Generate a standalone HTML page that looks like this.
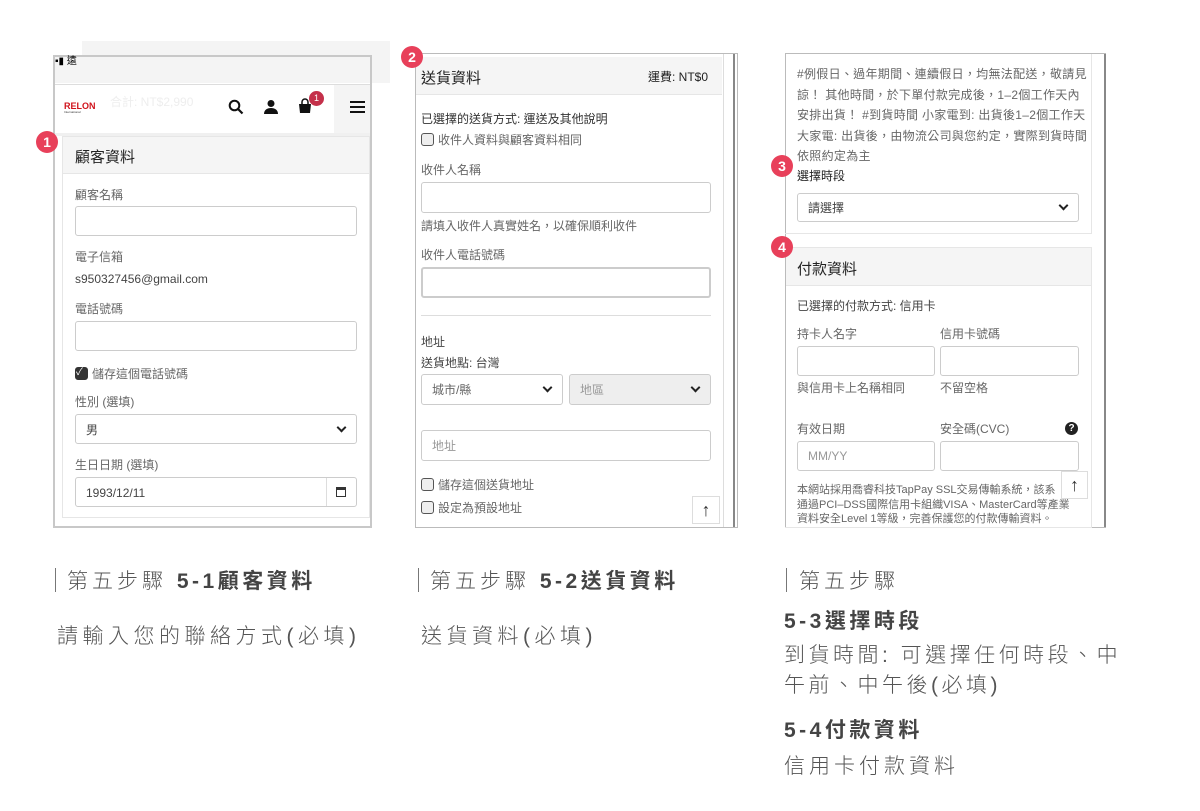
<!DOCTYPE html>
<html><head><meta charset="utf-8"><style>
*{box-sizing:border-box;margin:0;padding:0}
body{width:1200px;height:811px;background:#fff;position:relative;overflow:hidden;font-family:"Liberation Sans","Noto Sans CJK TC",sans-serif;color:#333}
.a{position:absolute}
.t{position:absolute;font-size:12px;color:#444;white-space:nowrap;line-height:14px}
.g{color:#666}
.in{position:absolute;border:1px solid #ccc;border-radius:3px;background:#fff}
.hd{position:absolute;background:#f5f5f5;border-bottom:1px solid #e6e6e6;font-size:15px;color:#222}
.badge{position:absolute;width:22px;height:22px;border-radius:50%;background:#e8405a;color:#fff;font-size:14px;font-weight:bold;text-align:center;line-height:22px}
.chev{position:absolute;width:7px;height:7px;border-right:2px solid #222;border-bottom:2px solid #222;transform:rotate(45deg)}
.cb{position:absolute;width:13px;height:13px;border:1.5px solid #555;border-radius:3px;background:#eee}
.cap{position:absolute;font-size:21px;color:#555;letter-spacing:4px;white-space:nowrap;font-weight:300}
.cap b{color:#444;font-weight:bold;letter-spacing:3.5px}
.bar{position:absolute;width:1px;height:24px;background:#777}
</style></head><body>

<!-- Panel 1 -->
<div class="a" style="left:82px;top:41px;width:308px;height:42px;background:#f4f4f4"></div>
<div class="a" style="left:53px;top:55px;width:319px;height:473px;border:2px solid #c8c8c8;background:#fff"></div>
<div class="a" style="left:55px;top:57px;width:315px;height:26px;background:#f4f4f4"></div>
<div class="t" style="left:55px;top:55px;font-size:10px;color:#000">▪▮ 遠</div>
<div class="a" style="left:55px;top:84px;width:315px;height:1px;background:#ddd"></div>
<div class="t" style="left:64px;top:101px;font-size:9px;font-weight:bold;color:#d0121b;line-height:10px">RELON</div>
<div class="t" style="left:64px;top:110px;font-size:3px;color:#333;line-height:4px">International</div>
<div class="t" style="left:110px;top:95px;font-size:12px;color:#eee">合計: NT$2,990</div>
<svg class="a" style="left:228px;top:99px" width="16" height="16" viewBox="0 0 16 16"><circle cx="6.5" cy="6.5" r="4.8" fill="none" stroke="#111" stroke-width="2"/><path d="M10 10l4.5 4.5" stroke="#111" stroke-width="2.2"/></svg>
<svg class="a" style="left:263px;top:99px" width="16" height="16" viewBox="0 0 16 16"><circle cx="8" cy="4.5" r="3.5" fill="#111"/><path d="M1 15c0-4 3-6 7-6s7 2 7 6z" fill="#111"/></svg>
<svg class="a" style="left:297px;top:98px" width="16" height="16" viewBox="0 0 16 16"><path d="M5 6V4a3 3 0 0 1 6 0v2" fill="none" stroke="#111" stroke-width="1.5"/><path d="M2 6h12l-1 9H3z" fill="#111"/></svg>
<div class="a" style="left:309px;top:91px;width:15px;height:15px;border-radius:50%;background:#c4304a;color:#fff;font-size:9px;text-align:center;line-height:15px">1</div>
<div class="a" style="left:334px;top:85px;width:36px;height:48px;background:#f4f4f4"></div>
<div class="a" style="left:350px;top:101px;width:15px;height:2px;background:#111;box-shadow:0 5px 0 #111,0 10px 0 #111"></div>
<div class="a" style="left:55px;top:133px;width:315px;height:3px;background:#f0f0f0"></div>
<div class="a" style="left:62px;top:136px;width:308px;height:382px;border:1px solid #e6e6e6"></div>
<div class="hd" style="left:63px;top:137px;width:306px;height:37px;padding:9px 0 0 12px">顧客資料</div>
<div class="badge" style="left:36px;top:131px">1</div>
<div class="t g" style="left:75px;top:188px">顧客名稱</div>
<div class="in" style="left:75px;top:206px;width:282px;height:30px"></div>
<div class="t g" style="left:75px;top:250px">電子信箱</div>
<div class="t" style="left:75px;top:272px">s950327456@gmail.com</div>
<div class="t g" style="left:75px;top:302px">電話號碼</div>
<div class="in" style="left:75px;top:321px;width:282px;height:30px"></div>
<div class="cb" style="left:75px;top:367px;background:#333;border-color:#333"></div>
<div class="t" style="left:76px;top:366px;color:#fff;font-size:10px">✓</div>
<div class="t g" style="left:92px;top:367px">儲存這個電話號碼</div>
<div class="t g" style="left:75px;top:395px">性別 (選填)</div>
<div class="in" style="left:75px;top:414px;width:282px;height:30px"></div>
<div class="t" style="left:86px;top:423px">男</div>
<div class="chev" style="left:338px;top:424px"></div>
<div class="t g" style="left:75px;top:458px">生日日期 (選填)</div>
<div class="in" style="left:75px;top:477px;width:282px;height:30px"></div>
<div class="a" style="left:326px;top:478px;width:1px;height:28px;background:#ddd"></div>
<div class="t" style="left:86px;top:486px">1993/12/11</div>
<div class="a" style="left:336px;top:487px;width:10px;height:10px;border:1.5px solid #333;border-top-width:3px"></div>

<!-- Panel 2 -->
<div class="a" style="left:415px;top:53px;width:323px;height:475px;border:1px solid #bbb;background:#fff"></div>
<div class="a" style="left:723px;top:54px;width:14px;height:473px;background:#fff;border-left:1px solid #ddd"></div>
<div class="a" style="left:733px;top:54px;width:2px;height:473px;background:#888"></div>
<div class="hd" style="left:416px;top:57px;width:306px;height:38px;padding:10px 0 0 5px">送貨資料</div>
<div class="t" style="left:648px;top:70px;color:#222">運費: NT$0</div>
<div class="badge" style="left:401px;top:46px">2</div>
<div class="t" style="left:421px;top:112px;color:#333">已選擇的送貨方式: 運送及其他說明</div>
<div class="cb" style="left:421px;top:133px"></div>
<div class="t g" style="left:438px;top:133px">收件人資料與顧客資料相同</div>
<div class="t g" style="left:421px;top:163px">收件人名稱</div>
<div class="in" style="left:421px;top:182px;width:290px;height:31px"></div>
<div class="t g" style="left:421px;top:219px">請填入收件人真實姓名，以確保順利收件</div>
<div class="t g" style="left:421px;top:248px">收件人電話號碼</div>
<div class="in" style="left:421px;top:267px;width:290px;height:31px;border-width:2px"></div>
<div class="a" style="left:421px;top:315px;width:290px;height:1px;background:#ddd"></div>
<div class="t" style="left:421px;top:335px">地址</div>
<div class="t" style="left:421px;top:356px">送貨地點: 台灣</div>
<div class="in" style="left:421px;top:374px;width:142px;height:31px"></div>
<div class="t g" style="left:432px;top:383px">城市/縣</div>
<div class="chev" style="left:544px;top:384px"></div>
<div class="in" style="left:569px;top:374px;width:142px;height:31px;background:#eee"></div>
<div class="t" style="left:580px;top:383px;color:#999">地區</div>
<div class="chev" style="left:692px;top:384px"></div>
<div class="in" style="left:421px;top:430px;width:290px;height:31px"></div>
<div class="t" style="left:432px;top:439px;color:#999">地址</div>
<div class="cb" style="left:421px;top:478px"></div>
<div class="t g" style="left:438px;top:478px">儲存這個送貨地址</div>
<div class="cb" style="left:421px;top:501px"></div>
<div class="t g" style="left:438px;top:501px">設定為預設地址</div>
<div class="a" style="left:692px;top:496px;width:28px;height:28px;border:1px solid #ddd;background:#fff;font-size:18px;text-align:center;line-height:26px;color:#333">↑</div>

<!-- Panel 3 -->
<div class="a" style="left:785px;top:53px;width:321px;height:475px;border:1px solid #bbb;background:#fff"></div>
<div class="a" style="left:1104px;top:54px;width:2px;height:473px;background:#888"></div>
<div class="a" style="left:785px;top:54px;width:307px;height:180px;border-right:1px solid #e6e6e6;border-bottom:1px solid #e6e6e6"></div>
<div class="t g" style="left:797px;top:64px;line-height:20.5px;letter-spacing:0.3px">#例假日、過年期間、連續假日，均無法配送，敬請見<br>諒！ 其他時間，於下單付款完成後，1–2個工作天內<br>安排出貨！ #到貨時間 小家電到: 出貨後1–2個工作天<br>大家電: 出貨後，由物流公司與您約定，實際到貨時間<br>依照約定為主</div>
<div class="badge" style="left:771px;top:155px">3</div>
<div class="t" style="left:797px;top:169px;color:#222">選擇時段</div>
<div class="in" style="left:797px;top:193px;width:282px;height:29px"></div>
<div class="t" style="left:808px;top:201px">請選擇</div>
<div class="chev" style="left:1060px;top:202px"></div>
<div class="a" style="left:785px;top:247px;width:307px;height:281px;border:1px solid #e6e6e6;border-left:none"></div>
<div class="hd" style="left:786px;top:248px;width:305px;height:38px;padding:10px 0 0 11px">付款資料</div>
<div class="badge" style="left:771px;top:236px">4</div>
<div class="t" style="left:797px;top:299px">已選擇的付款方式: 信用卡</div>
<div class="t g" style="left:797px;top:327px">持卡人名字</div>
<div class="t g" style="left:940px;top:327px">信用卡號碼</div>
<div class="in" style="left:797px;top:346px;width:138px;height:30px"></div>
<div class="in" style="left:940px;top:346px;width:139px;height:30px"></div>
<div class="t g" style="left:797px;top:381px">與信用卡上名稱相同</div>
<div class="t g" style="left:940px;top:381px">不留空格</div>
<div class="t g" style="left:797px;top:422px">有效日期</div>
<div class="t g" style="left:940px;top:422px">安全碼(CVC)</div>
<div class="a" style="left:1065px;top:422px;width:13px;height:13px;border-radius:50%;background:#222;color:#fff;font-size:10px;font-weight:bold;text-align:center;line-height:13px">?</div>
<div class="in" style="left:797px;top:441px;width:138px;height:30px"></div>
<div class="t" style="left:808px;top:449px;color:#999">MM/YY</div>
<div class="in" style="left:940px;top:441px;width:139px;height:30px"></div>
<div class="t g" style="left:797px;top:483px;font-size:11px;line-height:14.5px">本網站採用喬睿科技TapPay SSL交易傳輸系統，該系<br>通過PCI–DSS國際信用卡組織VISA、MasterCard等產業<br>資料安全Level 1等級，完善保護您的付款傳輸資料。</div>
<div class="a" style="left:1061px;top:471px;width:27px;height:28px;border:1px solid #ddd;background:#fff;font-size:18px;text-align:center;line-height:26px;color:#333">↑</div>

<!-- captions -->
<div class="bar" style="left:55px;top:568px"></div>
<div class="cap" style="left:67px;top:565px">第五步驟 <b>5-1顧客資料</b></div>
<div class="cap" style="left:57px;top:620px;letter-spacing:4.5px">請輸入您的聯絡方式(必填)</div>
<div class="bar" style="left:418px;top:568px"></div>
<div class="cap" style="left:430px;top:565px">第五步驟 <b>5-2送貨資料</b></div>
<div class="cap" style="left:421px;top:620px;letter-spacing:4.5px">送貨資料(必填)</div>
<div class="bar" style="left:786px;top:568px"></div>
<div class="cap" style="left:799px;top:565px">第五步驟</div>
<div class="cap" style="left:784px;top:605px"><b>5-3選擇時段</b></div>
<div class="cap" style="left:784px;top:641px;line-height:30px;white-space:normal;width:350px;letter-spacing:3.5px">到貨時間: 可選擇任何時段、中<br>午前、中午後(必填)</div>
<div class="cap" style="left:784px;top:714px"><b>5-4付款資料</b></div>
<div class="cap" style="left:784px;top:750px">信用卡付款資料</div>
</body></html>
